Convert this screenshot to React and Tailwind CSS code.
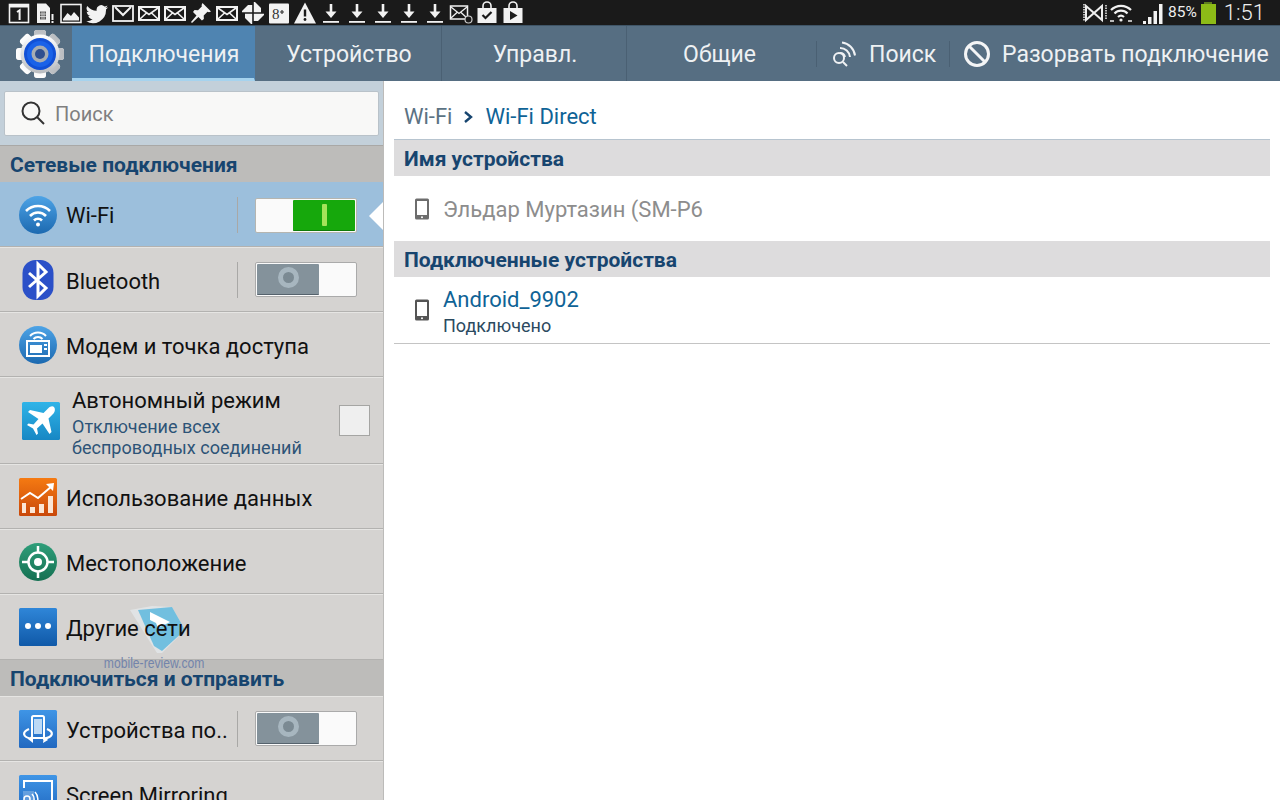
import { useId } from 'react';

const Slot = ({ children }) => (
  <div className="flex w-[26px] shrink-0 justify-center">
    <svg width="24" height="24" viewBox="0 0 24 24" fill="none">
      {children}
    </svg>
  </div>
);

const MailGlyph = () => (
  <Slot>
    <rect x="2" y="6" width="20" height="13" fill="#1a1a1a" stroke="#f2f2f2" strokeWidth="2" />
    <path d="M3 7l9 6.500L21 7M3 18l7-6.500M21 18l-7-6.500" stroke="#f2f2f2" strokeWidth="1.600" />
  </Slot>
);

const Download = () => (
  <Slot>
    <path d="M12 3v11" stroke="#f2f2f2" strokeWidth="2.600" />
    <path d="M6.500 10.500h11L12 17z" fill="#f2f2f2" />
    <rect x="4" y="20" width="16" height="1.800" fill="#f2f2f2" />
  </Slot>
);

const StatusIcons = () => (
  <div className="flex pl-[6px]">
    <Slot>
      <rect x="2.500" y="3.500" width="19" height="18" fill="#1a1a1a" stroke="#f2f2f2" strokeWidth="1.600" />
      <rect x="2.500" y="3.500" width="19" height="3" fill="#f2f2f2" />
      <path d="M10 11l2.600-1.600V19" stroke="#f2f2f2" strokeWidth="2" />
    </Slot>
    <Slot>
      <path d="M4 2.500h9l4 4.500v15H4z" fill="#f2f2f2" />
      <path d="M7 10.500h6v8H7z" fill="#555" />
      <path d="M7 13h6M7 15.500h6M9 10.500v8M11 10.500v8" stroke="#f2f2f2" strokeWidth=".7" />
      <path d="M19.500 13v6M19.500 20v2" stroke="#f2f2f2" strokeWidth="2" />
    </Slot>
    <Slot>
      <rect x="2" y="3.500" width="20" height="18" fill="#1a1a1a" stroke="#f2f2f2" strokeWidth="1.600" />
      <path d="M4 18l4.500-6 3.500 3 3-4 5 5.500V19.500H4z" fill="#f2f2f2" />
    </Slot>
    <Slot>
      <path
        d="M23 6.200c-.8.400-1.700.600-2.600.700.900-.600 1.700-1.400 2-2.500-.900.500-1.900.900-2.900 1.100A4.600 4.600 0 0 0 11.700 9.700 13 13 0 0 1 2.300 4.900a4.600 4.600 0 0 0 1.400 6.100c-.7 0-1.400-.2-2-.6 0 2.200 1.600 4.100 3.700 4.500-.7.2-1.400.2-2.100.1.600 1.800 2.300 3.100 4.300 3.200A9.300 9.300 0 0 1 1 20.100a13 13 0 0 0 20-11.600c.8-.6 1.500-1.400 2-2.300z"
        fill="#f2f2f2"
      />
    </Slot>
    <Slot>
      <rect x="2" y="5" width="20" height="15" fill="#1a1a1a" stroke="#f2f2f2" strokeWidth="1.800" />
      <path d="M4 6l8 8 8-8" stroke="#f2f2f2" strokeWidth="2" />
    </Slot>
    <MailGlyph />
    <MailGlyph />
    <Slot>
      <path d="M13.500 2l8.500 8.500-2 .8-1.500-.6-3.800 3.800.2 3.500-2 1.500-3.500-3.500L3 22l-1-1 5.500-6.500L4 11l1.500-2 3.500.2 3.800-3.800-.2-1.500z" fill="#f2f2f2" />
    </Slot>
    <MailGlyph />
    <Slot>
      {[0, 90, 180, 270].map(a => (
        <path key={a} d="M12.800 11.200V1h1.200l6 6v4.200z" fill="#f2f2f2" transform={`rotate(${a} 12 12)`} />
      ))}
    </Slot>
    <Slot>
      <rect x="2" y="2.500" width="20" height="20" rx="1" fill="#f2f2f2" />
      <text x="5" y="18" fontFamily="'Liberation Serif', serif" fontSize="15" fill="#333">
        8
      </text>
      <path d="M15 9v4M13 11h4" stroke="#333" strokeWidth="1.200" />
    </Slot>
    <Slot>
      <path d="M12 1.500l11 21H1z" fill="#f2f2f2" />
      <path d="M12 8.500v7" stroke="#1a1a1a" strokeWidth="2.400" />
      <circle cx="12" cy="18.500" r="1.400" fill="#1a1a1a" />
    </Slot>
    <Download />
    <Download />
    <Download />
    <Download />
    <Download />
    <Slot>
      <rect x="1.500" y="5" width="17" height="13" fill="#1a1a1a" stroke="#f2f2f2" strokeWidth="1.500" />
      <path d="M2 6l8 6.500L18 6M2 17l6-5.500M18 17l-6-5.500" stroke="#f2f2f2" strokeWidth="1.300" />
      <circle cx="19.500" cy="18.500" r="3.500" fill="#1a1a1a" stroke="#ccc" strokeWidth="1.200" />
    </Slot>
    <Slot>
      <path d="M2.500 7h19v15h-19z" fill="#f2f2f2" />
      <path d="M8 7V5a4 4 0 0 1 8 0v2" stroke="#f2f2f2" strokeWidth="1.600" />
      <path d="M7.500 14l3 3 6-6" stroke="#1a1a1a" strokeWidth="2.200" />
    </Slot>
    <Slot>
      <path d="M2.500 7h19v15h-19z" fill="#f2f2f2" />
      <path d="M8 7V5a4 4 0 0 1 8 0v2" stroke="#f2f2f2" strokeWidth="1.600" />
      <path d="M9 10l7.500 4.500L9 19z" fill="#1a1a1a" />
    </Slot>
  </div>
);

const StatusRight = () => (
  <div className="flex items-center">
    <svg width="26" height="22" viewBox="0 0 26 22" fill="none">
      <path d="M2 2v17M24 3v15" stroke="#eee" strokeWidth="1.500" strokeDasharray="1.500 1" />
      <path d="M4 4l16 14V4L4 18z" stroke="#eee" strokeWidth="2" />
    </svg>
    <svg width="24" height="22" viewBox="0 0 24 22" fill="none" className="ml-[1px]">
      <path d="M2 8a14 14 0 0 1 20 0M5.500 11.500a9 9 0 0 1 13 0M9 15a4.500 4.500 0 0 1 6 0" stroke="#f2f2f2" strokeWidth="2.200" />
      <circle cx="12" cy="18" r="1.600" fill="#f2f2f2" />
      <path d="M1 19h4M19 19h4" stroke="#eee" strokeWidth="1.400" />
    </svg>
    <svg width="22" height="22" viewBox="0 0 22 22" className="ml-[9px]">
      <path d="M1 19h3v3H1zM6 15h3.500v7H6zM11.500 9H15v13h-3.500zM17 2h3.500v20H17z" fill="#f2f2f2" />
    </svg>
    <span className="ml-[4px] font-['Roboto'] text-[15.500px] leading-none text-[#eee]">85%</span>
    <div className="ml-[4px] flex flex-col items-center">
      <div className="h-[2px] w-[8px] bg-[#5f7d1f]" />
      <div className="h-[20px] w-[15px] bg-[#8dbb17]" />
    </div>
    <span className="ml-[8px] mr-[15px] font-['Roboto'] text-[22px] font-light leading-none text-[#eee]">1:51</span>
  </div>
);

const GearIcon = () => {
  const id = useId();
  return (
    <svg width="50" height="50" viewBox="0 0 50 50" className="shrink-0">
      <defs>
        <linearGradient id={id} x1="0" y1="0" x2="0" y2="1">
          <stop offset="0" stopColor="#ffffff" />
          <stop offset="1" stopColor="#b9bcc0" />
        </linearGradient>
      </defs>
      <g fill={`url(#${id})`}>
        {[0, 45, 90, 135, 180, 225, 270, 315].map(a => (
          <rect key={a} x="19" y="1" width="12" height="48" rx="3" transform={`rotate(${a} 25 25)`} />
        ))}
        <circle cx="25" cy="25" r="19.500" />
      </g>
      <circle cx="25" cy="25" r="16" fill="#1150d6" />
      <circle cx="25" cy="25" r="13" fill="#1a62e8" />
      <circle cx="25" cy="25" r="8.500" fill="#a7adb3" />
      <circle cx="25" cy="25" r="5" fill="#2f4f8f" />
    </svg>
  );
};

const Tab = ({ label, width, active }) => (
  <div
    className={`flex h-full shrink-0 items-center justify-center border-r pl-[2px] ${width} ${
      active ? 'border-b-[3px] border-r-[#4f84b1] border-b-[#a6d3ee] bg-[#4f84b1] pt-[3px]' : 'border-[#4a6073]'
    }`}
  >
    <span className="pt-[2px] text-[23px] leading-none text-[#eef1f3]">{label}</span>
  </div>
);

const ActionBar = () => (
  <div className="flex h-[56px] shrink-0 items-center border-t border-[#3f5567] bg-[#566e82]">
    <div className="flex w-[72px] shrink-0 justify-center pl-[8px]">
      <GearIcon />
    </div>
    <Tab label="Подключения" width="w-[183px]" active />
    <Tab label="Устройство" width="w-[187px]" />
    <Tab label="Управл." width="w-[185px]" />
    <div className="flex h-full w-[189px] shrink-0 items-center justify-center pr-[4px]">
      <span className="pt-[2px] text-[23px] leading-none text-[#eef1f3]">Общие</span>
    </div>
    <div className="h-[26px] w-px bg-[#4a6073]" />
    <div className="flex w-[132px] shrink-0 items-center pl-[14px]">
      <svg width="28" height="28" viewBox="0 0 28 28" fill="none" stroke="#f0f2f4" strokeWidth="2">
        <circle cx="8" cy="18" r="5" />
        <path d="M12 22l4 4" />
        <path d="M9 8a10 10 0 0 1 10 9M11 2.500a15 15 0 0 1 13 13M9 13a5 5 0 0 1 5 4" />
      </svg>
      <span className="ml-[10px] pt-[2px] text-[23px] leading-none text-[#eef1f3]">Поиск</span>
    </div>
    <div className="h-[26px] w-px bg-[#4a6073]" />
    <div className="flex items-center pl-[13px]">
      <svg width="28" height="28" viewBox="0 0 28 28" fill="none" stroke="#f4f5f6" strokeWidth="3">
        <circle cx="14" cy="14" r="11.500" />
        <path d="M6 6l16 16" />
      </svg>
      <span className="ml-[11px] whitespace-nowrap pt-[2px] text-[23px] leading-none text-[#eef1f3]">Разорвать подключение</span>
    </div>
  </div>
);

const SectionHeader = ({ title }) => (
  <div className="flex h-[36px] shrink-0 items-center bg-[#bdbcba] pl-[10px] pt-[2px]">
    <span className="text-[21px] font-bold leading-none text-[#17456f]">{title}</span>
  </div>
);

const Round = ({ from, to, children }) => {
  const id = useId();
  return (
    <svg width="40" height="40" viewBox="0 0 40 40" fill="none">
      <defs>
        <linearGradient id={id} x1="0" y1="0" x2="0" y2="1">
          <stop offset="0" stopColor={from} />
          <stop offset="1" stopColor={to} />
        </linearGradient>
      </defs>
      <circle cx="20" cy="20" r="19" fill={`url(#${id})`} />
      {children}
    </svg>
  );
};

const Square = ({ from, to, children }) => {
  const id = useId();
  return (
    <svg width="40" height="40" viewBox="0 0 40 40" fill="none">
      <defs>
        <linearGradient id={id} x1="0" y1="0" x2="0" y2="1">
          <stop offset="0" stopColor={from} />
          <stop offset="1" stopColor={to} />
        </linearGradient>
      </defs>
      <rect x="1" y="1" width="38" height="38" rx="1.500" fill={`url(#${id})`} />
      {children}
    </svg>
  );
};

const WifiIcon = () => (
  <Round from="#4da3e6" to="#1c69b0">
    <path d="M8 16a17 17 0 0 1 24 0M12 21a11 11 0 0 1 16 0M16 25.500a5.500 5.500 0 0 1 8 0" stroke="#fff" strokeWidth="2.600" />
    <circle cx="20" cy="29.500" r="2" fill="#fff" />
  </Round>
);

const BluetoothIcon = () => (
  <svg width="40" height="40" viewBox="0 0 40 40" fill="none">
    <rect x="4.500" y="0" width="31" height="40" rx="13" fill="#2b50c8" />
    <path d="M11 13l17 15-8 8V4l8 8-17 15" stroke="#fff" strokeWidth="3" />
  </svg>
);

const ModemIcon = () => (
  <Round from="#4da3e6" to="#1c69b0">
    <rect x="9" y="16" width="22" height="15" stroke="#fff" strokeWidth="2" />
    <rect x="12" y="20" width="12" height="8" fill="#fff" />
    <path d="M26 20h3M26 24h3" stroke="#fff" strokeWidth="2" />
    <path d="M12 11a11 11 0 0 1 16 0M15.500 14a6 6 0 0 1 9 0" stroke="#fff" strokeWidth="2" />
  </Round>
);

const PlaneIcon = () => (
  <Square from="#2fb4e8" to="#1787c4">
    <path
      d="M33 6c-1.500-1.500-4 -.5-5.500 1l-5 5L9 9l-2 2 10.500 7-5 5.500-5-1L6 24l6 3.500L15.500 34l1.500-1.500-1-5 5.500-5 7 10.500 2-2-3-13.500 5-5C34 11 34.500 7.500 33 6z"
      fill="#fff"
    />
  </Square>
);

const DataIcon = () => (
  <Square from="#f57a12" to="#c9480a">
    <path d="M3 22l9-6 8 5 14-12" stroke="#fff" strokeWidth="2" />
    <path d="M28 7l8-1-1 8z" fill="#fff" />
    <path d="M12 30h5v6h-5zM21 27h5v9h-5zM30 19h5v17h-5zM4 26h4v10H4z" fill="#fbe6d5" />
  </Square>
);

const LocationIcon = () => (
  <Round from="#2f9e7a" to="#157052">
    <circle cx="20" cy="20" r="9.500" stroke="#fff" strokeWidth="2.500" />
    <circle cx="20" cy="20" r="4" fill="#fff" />
    <path d="M20 4v7M20 29v7M4 20h7M29 20h7" stroke="#fff" strokeWidth="2.500" />
  </Round>
);

const MoreIcon = () => (
  <Square from="#2f86d8" to="#1059a8">
    <circle cx="10" cy="19" r="3" fill="#fff" />
    <circle cx="20" cy="19" r="3" fill="#fff" />
    <circle cx="30" cy="19" r="3" fill="#fff" />
  </Square>
);

const NearbyIcon = () => (
  <Square from="#3f95e6" to="#2168c0">
    <rect x="14" y="7" width="12" height="22" rx="1.500" stroke="#fff" strokeWidth="2" />
    <rect x="16" y="10" width="8" height="15" fill="#bcd9f5" />
    <path d="M11 20c-7 3-7 8 3 10M29 20c7 3 7 8-4 10" stroke="#fff" strokeWidth="2.200" />
    <path d="M15 26v8l-5-4zM25 34l5-3-4-4z" fill="#fff" />
  </Square>
);

const MirrorIcon = () => (
  <Square from="#3f95e6" to="#2168c0">
    <path d="M6 14V7h28v26H18" stroke="#fff" strokeWidth="2" />
    <rect x="5" y="17" width="11" height="16" fill="#fff" opacity=".25" />
    <circle cx="9" cy="25" r="3" stroke="#fff" strokeWidth="1.500" />
    <path d="M14 20a7 7 0 0 1 0 10M17 18a10 10 0 0 1 0 14" stroke="#fff" strokeWidth="1.500" />
  </Square>
);

const Toggle = ({ on }) =>
  on ? (
    <div className="flex h-[35px] w-[102px] rounded-[2px] border border-[#b5b5b0] bg-[#fafafa] py-[1px] pr-[1px]">
      <div className="ml-auto flex w-[62px] items-center justify-center rounded-[1px] border-b border-[#0f7a08] bg-[#16a80c]">
        <div className="h-[22px] w-[5px] rounded-[1px] bg-[#a4e35a]" />
      </div>
    </div>
  ) : (
    <div className="flex h-[35px] w-[102px] rounded-[2px] border border-[#aaaaaa] bg-[#fafafa] p-[1px]">
      <div className="flex w-[62px] items-center justify-center rounded-[1px] border-b border-[#55626c] bg-[#84929b] pb-[3px]">
        <div className="h-[21px] w-[21px] rounded-full border-[5px] border-[#a7b6bf] bg-[#7b8a93]" />
      </div>
    </div>
  );

const Row = ({ icon, label, toggle, height = 'h-[65px]', active, lift = 'pt-[4px]' }) => (
  <div
    className={`flex shrink-0 items-center border-b border-[#b3b2b0] ${height} ${
      active ? 'bg-[#9cbfdc] pt-[2px]' : 'border-t border-t-[#e6e5e3]'
    }`}
  >
    <div className="flex w-[66px] shrink-0 justify-center pl-[18px] pr-[8px]">{icon}</div>
    <span className={`relative z-10 flex-1 whitespace-nowrap text-[22px] leading-none text-[#111] ${lift}`}>{label}</span>
    {toggle !== undefined && (
      <div className="flex items-center">
        <div className="h-[36px] w-px bg-[#a9a8a6]" />
        <div className="ml-[17px] mr-[26px]">
          <Toggle on={toggle} />
        </div>
      </div>
    )}
  </div>
);

const AirplaneRow = () => (
  <div className="flex h-[87px] shrink-0 items-center border-y border-b-[#b3b2b0] border-t-[#e6e5e3]">
    <div className="flex w-[72px] shrink-0 justify-center pl-[10px] pr-[4px]">
      <div className="ml-[4px]">
        <PlaneIcon />
      </div>
    </div>
    <div className="flex-1 pt-[5px]">
      <div className="text-[22px] leading-[26px] text-[#111]">Автономный режим</div>
      <div className="mt-[2px] text-[18px] leading-[21px] text-[#2d5377]">
        Отключение всех
        <br />
        беспроводных соединений
      </div>
    </div>
    <div className="mr-[13px] h-[31px] w-[31px] border border-[#a5a5a3] bg-[#efefef]" />
  </div>
);

const Sidebar = () => (
  <div className="relative flex w-[384px] shrink-0 flex-col overflow-hidden border-r border-[#bcbbb9] bg-[#d5d3d1]">
    <div className="flex h-[64px] shrink-0 items-center bg-[#c3d0da] px-[4px]">
      <div className="flex h-[45px] w-[377px] items-center rounded-[2px] border border-[#b9c2c9] bg-[#f8f8f7] pl-[15px]">
        <svg width="26" height="26" viewBox="0 0 26 26" fill="none" stroke="#333" strokeWidth="2">
          <circle cx="11" cy="11" r="8.500" />
          <path d="M17 17l7 7" />
        </svg>
        <span className="ml-[9px] pt-[2px] text-[20px] leading-none text-[#7f7f7f]">Поиск</span>
      </div>
    </div>
    <div className="h-px shrink-0 bg-[#a9a8a6]" />
    <SectionHeader title="Сетевые подключения" />
    <Row icon={<WifiIcon />} label="Wi-Fi" toggle={true} active lift="pt-[2px]" />
    <Row icon={<BluetoothIcon />} label="Bluetooth" toggle={false} />
    <Row icon={<ModemIcon />} label="Модем и точка доступа" />
    <AirplaneRow />
    <Row icon={<DataIcon />} label="Использование данных" />
    <Row icon={<LocationIcon />} label="Местоположение" />
    <Row icon={<MoreIcon />} label="Другие сети" height="h-[66px]" />
    <SectionHeader title="Подключиться и отправить" />
    <Row icon={<NearbyIcon />} label="Устройства по.." toggle={false} />
    <Row icon={<MirrorIcon />} label="Screen Mirroring" />

    {/* watermark */}
    <div className="absolute left-[92px] top-[525px] z-0 flex w-[124px] flex-col items-center">
      <svg width="56" height="48" viewBox="0 0 56 48" className="ml-[7px]">
        <path d="M0 4L22 0l20 1 13 23-23 23-5 0z" fill="#e8eef2" opacity=".6" />
        <path d="M8 4L42 1l13 23-23 21-8-5z" fill="#5db8de" opacity=".85" />
        <path d="M20 6l20 10-12 6-2-5-6-3z" fill="#fff" />
      </svg>
      <span className="mt-[1px] whitespace-nowrap font-['Liberation_Sans'] text-[15px] leading-none text-[#7384ab] [transform:scaleX(.81)]">mobile-review.com</span>
    </div>
    {/* wedge pointing at the open pane */}
    <div className="absolute right-[-1px] top-[120px] h-0 w-0 border-y-[15px] border-r-[15px] border-y-transparent border-r-white" />
  </div>
);

const PhoneGlyph = ({ color }) => (
  <svg width="16" height="22" viewBox="0 0 16 22" className="shrink-0">
    <rect x="1" y="0.500" width="14" height="21" rx="1.500" fill={color} />
    <rect x="3" y="3" width="10" height="14" fill="#fff" />
    <circle cx="8" cy="19.300" r="1" fill="#fff" />
  </svg>
);

const PaneHeader = ({ title }) => (
  <div className="flex h-[36px] items-center bg-[#dddcdd] pl-[10px] pt-[2px]">
    <span className="text-[21px] font-bold leading-none text-[#17456f]">{title}</span>
  </div>
);

const DetailPane = () => (
  <div className="flex-1 bg-white pl-[10px] pr-[10px]">
    <div className="flex h-[59px] items-center border-b border-[#b7c4cf] pl-[10px] pt-[14px]">
      <span className="text-[22px] leading-none text-[#5b7283]">Wi-Fi</span>
      <svg width="12" height="14" viewBox="0 0 12 14" fill="none" className="ml-[11px] mr-[10px]" stroke="#17456f" strokeWidth="2.400">
        <path d="M2 2l6 5-6 5" />
      </svg>
      <span className="text-[22px] leading-none text-[#0f6396]">Wi-Fi Direct</span>
    </div>
    <PaneHeader title="Имя устройства" />
    <div className="flex h-[65px] items-center pl-[20px]">
      <PhoneGlyph color="#6d6d6d" />
      <span className="ml-[13px] pt-[2px] text-[22px] leading-none text-[#8d8d8d]">Эльдар Муртазин (SM-P6</span>
    </div>
    <PaneHeader title="Подключенные устройства" />
    <div className="flex h-[67px] items-center border-b border-[#c4c4c4] pl-[20px]">
      <PhoneGlyph color="#555555" />
      <div className="ml-[13px] pt-[4px]">
        <div className="text-[22px] leading-[26px] text-[#0f6396]">Android_9902</div>
        <div className="mt-[1px] text-[18px] leading-[24px] text-[#2c4a5f]">Подключено</div>
      </div>
    </div>
  </div>
);

export default function App() {
  return (
    <div className="flex h-[800px] w-[1280px] flex-col overflow-hidden bg-white font-['Roboto',sans-serif]">
      <div className="flex h-[25px] shrink-0 items-center justify-between bg-[#1a1a1a]">
        <StatusIcons />
        <StatusRight />
      </div>
      <ActionBar />
      <div className="flex min-h-0 flex-1">
        <Sidebar />
        <DetailPane />
      </div>
    </div>
  );
}
